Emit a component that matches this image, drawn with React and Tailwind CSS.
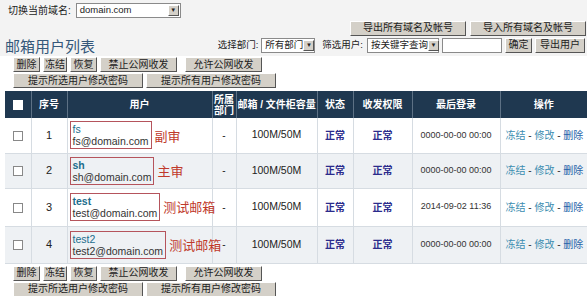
import React from "react";

const users = [
  { no: 1, name: "fs", email: "fs@domain.com", tag: "副审", last: "0000-00-00 00:00", bold: false, h: "h-[35px]", bg: "bg-white" },
  { no: 2, name: "sh", email: "sh@domain.com", tag: "主审", last: "0000-00-00 00:00", bold: true, h: "h-[35px]", bg: "bg-[#eef1f4]" },
  { no: 3, name: "test", email: "test@domain.com", tag: "测试邮箱", last: "2014-09-02 11:36", bold: true, h: "h-[38px]", bg: "bg-white" },
  { no: 4, name: "test2", email: "test2@domain.com", tag: "测试邮箱", last: "0000-00-00 00:00", bold: false, h: "h-[37px]", bg: "bg-[#eef1f4]" },
];

const Btn = ({ children, w }) => (
  <button
    className={`${w} h-[15px] bg-[#d4d0c8] border border-t-white border-l-white border-b-[#555] border-r-[#555] text-[10px] leading-[12px] text-[#222] flex items-center justify-center whitespace-nowrap`}
  >
    {children}
  </button>
);

const FakeSelect = ({ label, w }) => (
  <div className={`${w} h-[15px] bg-white border border-[#8a8a8a] flex items-center justify-between text-[9.5px] pl-[3px]`}>
    <span className="whitespace-nowrap">{label}</span>
    <span className="w-[11px] h-[11px] mr-[1px] shrink-0 bg-[#d4d0c8] border border-t-white border-l-white border-b-[#555] border-r-[#555] text-[6px] leading-none flex items-center justify-center">
      ▼
    </span>
  </div>
);

const ActionButtons = () => (
  <div className="pl-[13px] flex flex-col gap-[1px]">
    <div className="flex gap-[3px]">
      <Btn w="w-[27px]">删除</Btn>
      <Btn w="w-[24px]">冻结</Btn>
      <Btn w="w-[27px]">恢复</Btn>
      <Btn w="w-[77px]">禁止公网收发</Btn>
      <div className="w-[2px]" />
      <Btn w="w-[77px]">允许公网收发</Btn>
    </div>
    <div className="flex gap-[3px]">
      <Btn w="w-[130px]">提示所选用户修改密码</Btn>
      <Btn w="w-[130px]">提示所有用户修改密码</Btn>
    </div>
  </div>
);

const App = () => {
  return (
    <div className="w-[587px] h-[296px] overflow-hidden bg-white text-[#222] font-['Liberation_Sans','Noto_Sans_CJK_SC',sans-serif]">
      <div className="bg-[#f3f3f3] pb-[2px]">
        <div className="h-[20px] flex items-center pl-[8px] gap-[5px]">
          <span className="text-[10px]">切换当前域名:</span>
          <FakeSelect label="domain.com" w="w-[105px]" />
        </div>
        <div className="h-[16px] flex justify-end items-center gap-[4px] pr-[1px]">
          <Btn w="w-[116px]">导出所有域名及帐号</Btn>
          <Btn w="w-[116px]">导入所有域名及帐号</Btn>
        </div>
        <div className="h-[18px] flex items-center justify-between pl-[5px] pr-[2px]">
          <span className="text-[15px] leading-none text-[#35587a] font-['Noto_Sans_CJK_SC',sans-serif]">
            邮箱用户列表
          </span>
          <div className="flex items-center text-[9.5px]">
            <span className="mr-[3px]">选择部门:</span>
            <FakeSelect label="所有部门" w="w-[54px]" />
            <span className="ml-[7px] mr-[4px]">筛选用户:</span>
            <FakeSelect label="按关键字查询" w="w-[72px]" />
            <div className="ml-[3px] w-[60px] h-[15px] bg-white border border-[#8a8a8a]" />
            <div className="ml-[3px]">
              <Btn w="w-[27px]">确定</Btn>
            </div>
            <div className="ml-[3px]">
              <Btn w="w-[50px]">导出用户</Btn>
            </div>
          </div>
        </div>
      </div>
      <div className="pt-[1px]">
        <ActionButtons />
      </div>
      <div className="pl-[5px] pt-[3px]">
        <table className="table-fixed border-collapse w-[582px] text-[10px]">
          <colgroup>
            <col className="w-[26px]" />
            <col className="w-[36px]" />
            <col className="w-[145px]" />
            <col className="w-[24px]" />
            <col className="w-[81px]" />
            <col className="w-[36px]" />
            <col className="w-[59px]" />
            <col className="w-[88px]" />
            <col className="w-[87px]" />
          </colgroup>
          <thead>
            <tr className="h-[27px] bg-[#1f3850] text-white font-bold text-[10px]">
              <th className="border-r border-[#5d7185]">
                <span className="inline-block w-[10px] h-[10px] bg-white align-middle" />
              </th>
              <th className="border-r border-[#5d7185]">序号</th>
              <th className="border-r border-[#5d7185]">用户</th>
              <th className="border-r border-[#5d7185] leading-[11px]">
                所属
                <br />
                部门
              </th>
              <th className="border-r border-[#5d7185] whitespace-nowrap text-left pl-[1px]">邮箱 / 文件柜容量</th>
              <th className="border-r border-[#5d7185]">状态</th>
              <th className="border-r border-[#5d7185]">收发权限</th>
              <th className="border-r border-[#5d7185]">最后登录</th>
              <th>操作</th>
            </tr>
          </thead>
          <tbody>
            {users.map((u) => (
              <tr key={u.no} className={`${u.h} ${u.bg} border-b border-[#d6dce2]`}>
                <td className="border-r border-[#d6dce2] text-center">
                  <span className="inline-block w-[10px] h-[10px] bg-white border border-[#888] align-middle" />
                </td>
                <td className="border-r border-[#d6dce2] text-center text-[11px]">{u.no}</td>
                <td className="border-r border-[#d6dce2] pl-[2px]">
                  <div className="flex items-center gap-[3px]">
                    <div className="border border-[#b5545c] px-[2px] py-[1px] leading-[12px] text-[10.5px]">
                      <div className={`text-[#1d6d8c] ${u.bold ? "font-bold" : ""}`}>{u.name}</div>
                      <div className="text-[#333] whitespace-nowrap">{u.email}</div>
                    </div>
                    <span className="text-[#c0392b] text-[13px] font-['Noto_Sans_CJK_SC',sans-serif] whitespace-nowrap">
                      {u.tag}
                    </span>
                  </div>
                </td>
                <td className="border-r border-[#d6dce2] text-center">-</td>
                <td className="border-r border-[#d6dce2] text-center text-[10.5px]">100M/50M</td>
                <td className="border-r border-[#d6dce2] text-center font-bold text-[#2b2b8c]">正常</td>
                <td className="border-r border-[#d6dce2] text-center font-bold text-[#2b2b8c]">正常</td>
                <td className="border-r border-[#d6dce2] text-center text-[9px] text-[#333]">{u.last}</td>
                <td className="pl-[5px] text-[#3b8db0] whitespace-nowrap">
                  冻结 <span className="text-[#333]">-</span> 修改 <span className="text-[#333]">-</span>{" "}
                  <span className="text-[#2563a8]">删除</span>
                </td>
              </tr>
            ))}
          </tbody>
        </table>
      </div>
      <div className="pt-[2px]">
        <ActionButtons />
      </div>
    </div>
  );
};

export default App;
